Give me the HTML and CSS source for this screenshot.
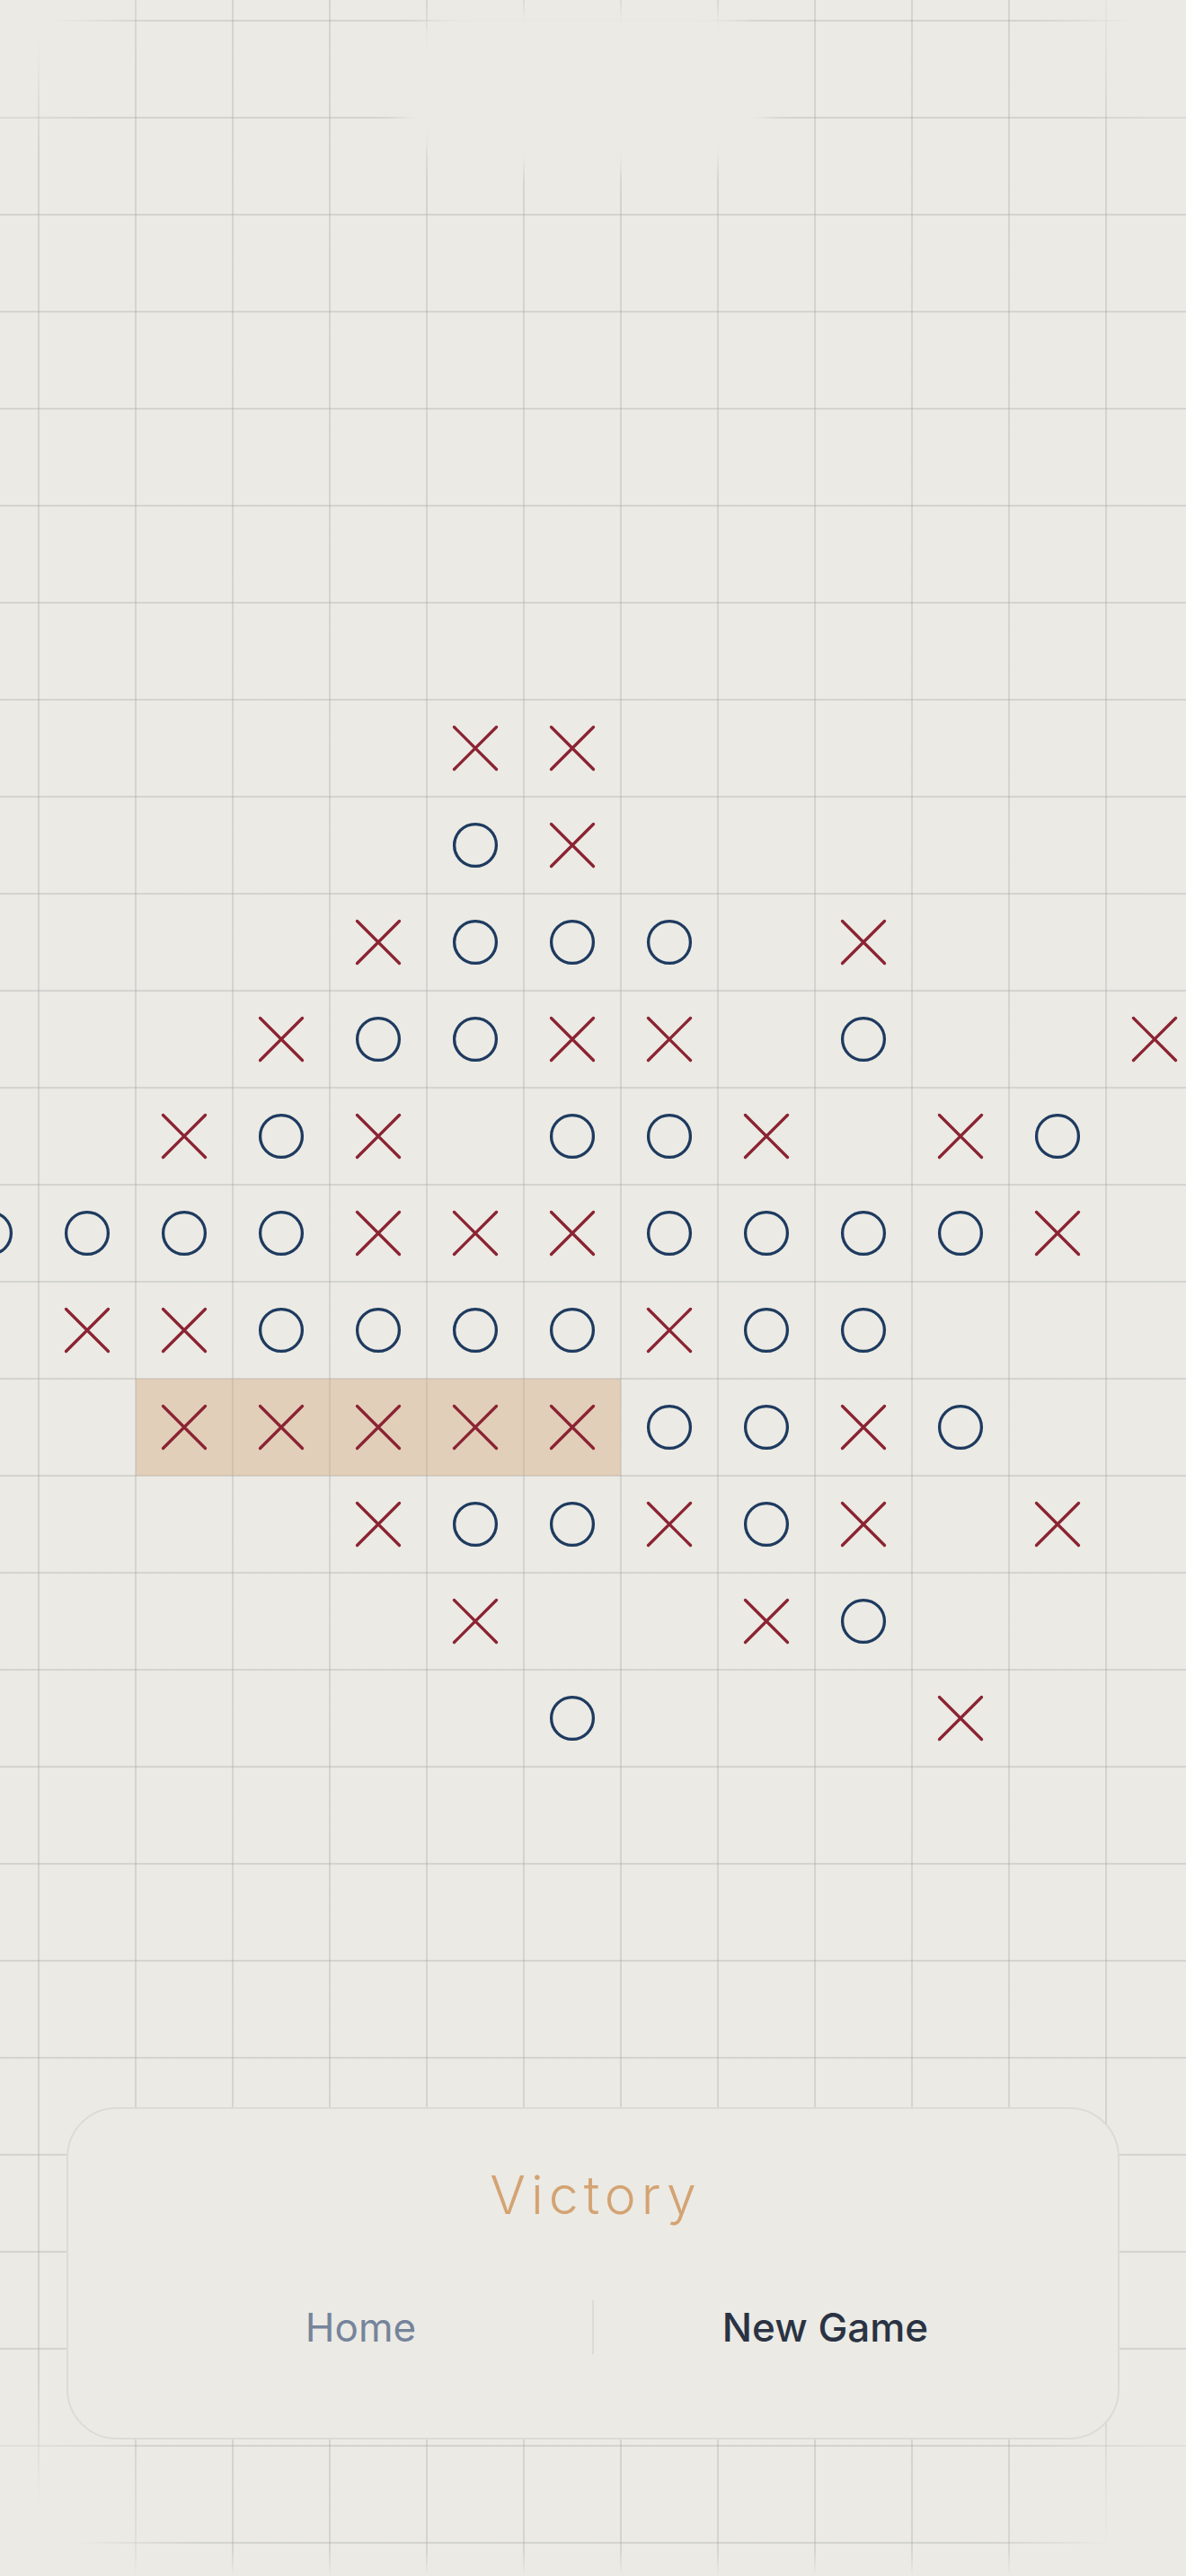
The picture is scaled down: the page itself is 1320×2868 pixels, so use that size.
FILE: index.html
```html
<!DOCTYPE html>
<html lang="en">
<head>
<meta charset="utf-8">
<title>Victory</title>
<link rel="stylesheet" href="styles.css">
</head>
<body>
<svg class="defs" aria-hidden="true">
  <symbol id="mx" viewBox="0 0 108 108"><path d="M30.5 30.5 77.5 77.5M77.5 30.5 30.5 77.5"/></symbol>
  <symbol id="mo" viewBox="0 0 108 108"><circle cx="54" cy="54" r="23.4"/></symbol>
</svg>
<div class="screen">
  <div class="board">
    <div class="win"></div>

    <svg class="mark x" style="--r:9;--c:6"><use href="#mx"/></svg>
    <svg class="mark x" style="--r:9;--c:7"><use href="#mx"/></svg>

    <svg class="mark o" style="--r:10;--c:6"><use href="#mo"/></svg>
    <svg class="mark x" style="--r:10;--c:7"><use href="#mx"/></svg>

    <svg class="mark x" style="--r:11;--c:5"><use href="#mx"/></svg>
    <svg class="mark o" style="--r:11;--c:6"><use href="#mo"/></svg>
    <svg class="mark o" style="--r:11;--c:7"><use href="#mo"/></svg>
    <svg class="mark o" style="--r:11;--c:8"><use href="#mo"/></svg>
    <svg class="mark x" style="--r:11;--c:10"><use href="#mx"/></svg>

    <svg class="mark x" style="--r:12;--c:4"><use href="#mx"/></svg>
    <svg class="mark o" style="--r:12;--c:5"><use href="#mo"/></svg>
    <svg class="mark o" style="--r:12;--c:6"><use href="#mo"/></svg>
    <svg class="mark x" style="--r:12;--c:7"><use href="#mx"/></svg>
    <svg class="mark x" style="--r:12;--c:8"><use href="#mx"/></svg>
    <svg class="mark o" style="--r:12;--c:10"><use href="#mo"/></svg>
    <svg class="mark x" style="--r:12;--c:13"><use href="#mx"/></svg>

    <svg class="mark x" style="--r:13;--c:3"><use href="#mx"/></svg>
    <svg class="mark o" style="--r:13;--c:4"><use href="#mo"/></svg>
    <svg class="mark x" style="--r:13;--c:5"><use href="#mx"/></svg>
    <svg class="mark o" style="--r:13;--c:7"><use href="#mo"/></svg>
    <svg class="mark o" style="--r:13;--c:8"><use href="#mo"/></svg>
    <svg class="mark x" style="--r:13;--c:9"><use href="#mx"/></svg>
    <svg class="mark x" style="--r:13;--c:11"><use href="#mx"/></svg>
    <svg class="mark o" style="--r:13;--c:12"><use href="#mo"/></svg>

    <svg class="mark o" style="--r:14;--c:1"><use href="#mo"/></svg>
    <svg class="mark o" style="--r:14;--c:2"><use href="#mo"/></svg>
    <svg class="mark o" style="--r:14;--c:3"><use href="#mo"/></svg>
    <svg class="mark o" style="--r:14;--c:4"><use href="#mo"/></svg>
    <svg class="mark x" style="--r:14;--c:5"><use href="#mx"/></svg>
    <svg class="mark x" style="--r:14;--c:6"><use href="#mx"/></svg>
    <svg class="mark x" style="--r:14;--c:7"><use href="#mx"/></svg>
    <svg class="mark o" style="--r:14;--c:8"><use href="#mo"/></svg>
    <svg class="mark o" style="--r:14;--c:9"><use href="#mo"/></svg>
    <svg class="mark o" style="--r:14;--c:10"><use href="#mo"/></svg>
    <svg class="mark o" style="--r:14;--c:11"><use href="#mo"/></svg>
    <svg class="mark x" style="--r:14;--c:12"><use href="#mx"/></svg>

    <svg class="mark x" style="--r:15;--c:2"><use href="#mx"/></svg>
    <svg class="mark x" style="--r:15;--c:3"><use href="#mx"/></svg>
    <svg class="mark o" style="--r:15;--c:4"><use href="#mo"/></svg>
    <svg class="mark o" style="--r:15;--c:5"><use href="#mo"/></svg>
    <svg class="mark o" style="--r:15;--c:6"><use href="#mo"/></svg>
    <svg class="mark o" style="--r:15;--c:7"><use href="#mo"/></svg>
    <svg class="mark x" style="--r:15;--c:8"><use href="#mx"/></svg>
    <svg class="mark o" style="--r:15;--c:9"><use href="#mo"/></svg>
    <svg class="mark o" style="--r:15;--c:10"><use href="#mo"/></svg>

    <svg class="mark x" style="--r:16;--c:3"><use href="#mx"/></svg>
    <svg class="mark x" style="--r:16;--c:4"><use href="#mx"/></svg>
    <svg class="mark x" style="--r:16;--c:5"><use href="#mx"/></svg>
    <svg class="mark x" style="--r:16;--c:6"><use href="#mx"/></svg>
    <svg class="mark x" style="--r:16;--c:7"><use href="#mx"/></svg>
    <svg class="mark o" style="--r:16;--c:8"><use href="#mo"/></svg>
    <svg class="mark o" style="--r:16;--c:9"><use href="#mo"/></svg>
    <svg class="mark x" style="--r:16;--c:10"><use href="#mx"/></svg>
    <svg class="mark o" style="--r:16;--c:11"><use href="#mo"/></svg>

    <svg class="mark x" style="--r:17;--c:5"><use href="#mx"/></svg>
    <svg class="mark o" style="--r:17;--c:6"><use href="#mo"/></svg>
    <svg class="mark o" style="--r:17;--c:7"><use href="#mo"/></svg>
    <svg class="mark x" style="--r:17;--c:8"><use href="#mx"/></svg>
    <svg class="mark o" style="--r:17;--c:9"><use href="#mo"/></svg>
    <svg class="mark x" style="--r:17;--c:10"><use href="#mx"/></svg>
    <svg class="mark x" style="--r:17;--c:12"><use href="#mx"/></svg>

    <svg class="mark x" style="--r:18;--c:6"><use href="#mx"/></svg>
    <svg class="mark x" style="--r:18;--c:9"><use href="#mx"/></svg>
    <svg class="mark o" style="--r:18;--c:10"><use href="#mo"/></svg>

    <svg class="mark o" style="--r:19;--c:7"><use href="#mo"/></svg>
    <svg class="mark x" style="--r:19;--c:11"><use href="#mx"/></svg>
  </div>

  <div class="edges"></div>
  <div class="island"></div>

  <section class="result">
    <h1 class="title">Victory</h1>
    <div class="actions">
      <button class="btn btn-home" type="button">Home</button>
      <span class="divider"></span>
      <button class="btn btn-new" type="button">New Game</button>
    </div>
  </section>
</div>
</body>
</html>
```

FILE: styles.css
```css
* { box-sizing: border-box; }

html, body {
  margin: 0;
  padding: 0;
}

body {
  background: #ebeae4;
  font-family: Inter, "Noto Sans", "Liberation Sans", sans-serif;
}

.defs {
  position: absolute;
  width: 0;
  height: 0;
  overflow: hidden;
}

.screen {
  position: relative;
  width: 1320px;
  height: 2868px;
  overflow: hidden;
  background: #ebeae4;
}

/* ---------- board ---------- */
.board {
  display: grid;
  grid-template-columns: repeat(13, 108px);
  grid-template-rows: repeat(28, 108px);
  width: 1404px;
  margin: -85px 0 0 -65px;
  background-image:
    linear-gradient(to right, rgba(150, 152, 156, 0.27) 0 2px, transparent 2px),
    linear-gradient(to bottom, rgba(150, 152, 156, 0.27) 0 2px, transparent 2px);
  background-size: 108px 108px;
  background-position: -1px -1px;
}

.win {
  grid-row: 16;
  grid-column: 3 / 8;
  background: rgba(212, 163, 115, 0.38);
}

.mark {
  grid-row: var(--r);
  grid-column: var(--c);
  width: 108px;
  height: 108px;
  fill: none;
  stroke-width: 3.3;
  stroke-linecap: round;
}

.mark.x { stroke: #8b2332; }
.mark.o { stroke: #1e3a5f; }

/* ---------- soft screen edges ---------- */
.edges {
  position: absolute;
  inset: 0;
  pointer-events: none;
  background:
    radial-gradient(circle at 0 0, #ebeae4 0 60px, rgba(235, 234, 228, 0) 170px),
    radial-gradient(circle at 100% 0, #ebeae4 0 60px, rgba(235, 234, 228, 0) 170px),
    radial-gradient(circle at 0 100%, #ebeae4 0 90px, rgba(235, 234, 228, 0) 220px),
    radial-gradient(circle at 100% 100%, #ebeae4 0 90px, rgba(235, 234, 228, 0) 220px),
    linear-gradient(to top, #ebeae4 0, rgba(235, 234, 228, 0) 30px);
}

.island {
  position: absolute;
  left: 460px;
  top: 28px;
  width: 380px;
  height: 140px;
  border-radius: 70px;
  background: #ebeae4;
  box-shadow: 0 0 24px 22px #ebeae4;
  pointer-events: none;
}

/* ---------- result card ---------- */
.result {
  position: absolute;
  left: 74px;
  right: 74px;
  bottom: 152px;
  height: 370px;
  border: 2px solid #dcdbd6;
  border-radius: 56px;
  background: #ebeae4;
  padding: 60px 68px 93px;
  display: flex;
  flex-direction: column;
  align-items: center;
}

.title {
  margin: 0;
  padding-left: 6px;
  font-size: 59px;
  line-height: 72px;
  font-weight: 300;
  letter-spacing: 6px;
  color: #d4a373;
}

.actions {
  align-self: stretch;
  margin-top: 81px;
  height: 60px;
  display: grid;
  grid-template-columns: 1fr 2px 1fr;
}

.btn {
  border: 0;
  background: none;
  padding: 0;
  margin: 0;
  font-family: inherit;
  font-size: 44px;
  line-height: 60px;
  text-align: center;
  cursor: pointer;
}

.btn-home {
  font-weight: 400;
  color: #76849b;
}

.divider {
  background: #dcdbd6;
}

.btn-new {
  font-weight: 500;
  color: #2a3343;
}
```
